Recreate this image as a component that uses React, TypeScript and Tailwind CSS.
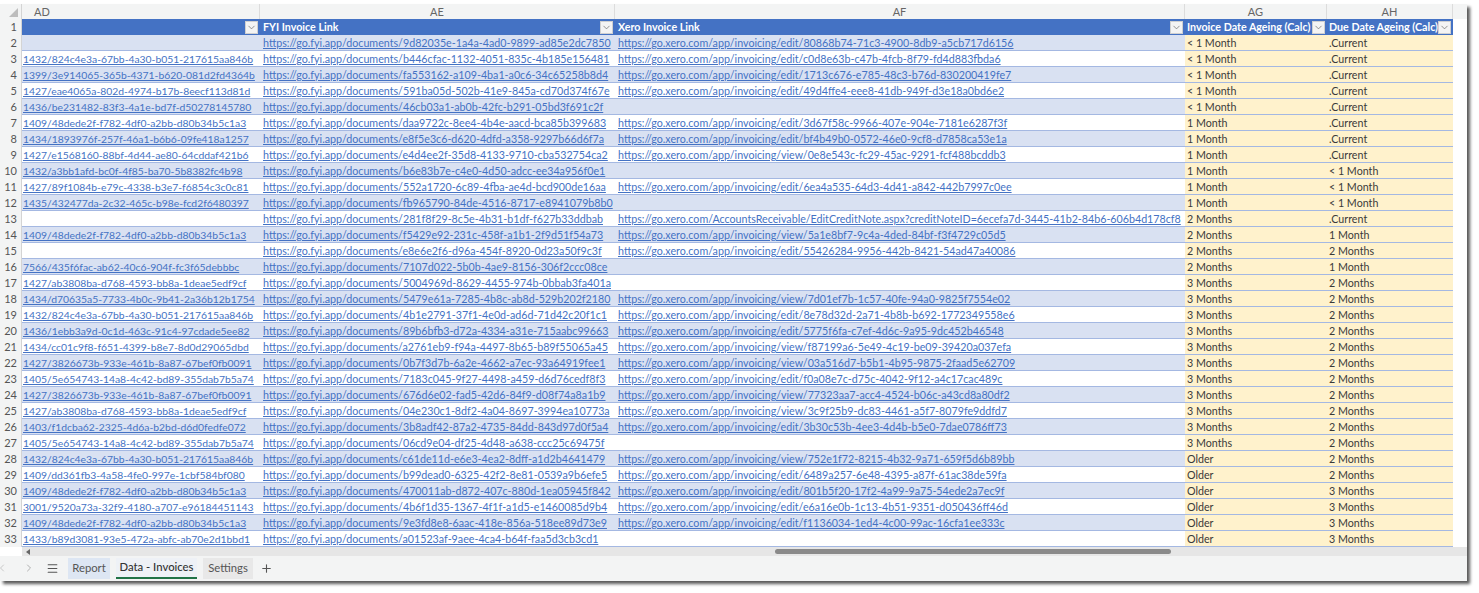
import React from 'react';
import { ChevronDown, ChevronLeft, ChevronRight, Menu, Plus } from 'lucide-react';

const fyi = 'https://go.fyi.app/documents/';
const xe = 'https://go.xero.com/app/invoicing/edit/';
const xv = 'https://go.xero.com/app/invoicing/view/';

const a = '1409/48dede2f-f782-4df0-a2bb-d80b34b5c1a3';
const b = '1432/824c4e3a-67bb-4a30-b051-217615aa846b';
const c = '1427/3826673b-933e-461b-8a87-67bef0fb0091';
const d = '1427/ab3808ba-d768-4593-bb8a-1deae5edf9cf';
const e = '1405/5e654743-14a8-4c42-bd89-355dab7b5a74';

const rows = [
  ['', '9d82035e-1a4a-4ad0-9899-ad85e2dc7850', xe + '80868b74-71c3-4900-8db9-a5cb717d6156', '< 1 Month', '.Current'],
  [b, 'b446cfac-1132-4051-835c-4b185e156481', xe + 'c0d8e63b-c47b-4fcb-8f79-fd4d883fbda6', '< 1 Month', '.Current'],
  ['1399/3e914065-365b-4371-b620-081d2fd4364b', 'fa553162-a109-4ba1-a0c6-34c65258b8d4', xe + '1713c676-e785-48c3-b76d-830200419fe7', '< 1 Month', '.Current'],
  ['1427/eae4065a-802d-4974-b17b-8eecf113d81d', '591ba05d-502b-41e9-845a-cd70d374f67e', xe + '49d4ffe4-eee8-41db-949f-d3e18a0bd6e2', '< 1 Month', '.Current'],
  ['1436/be231482-83f3-4a1e-bd7f-d50278145780', '46cb03a1-ab0b-42fc-b291-05bd3f691c2f', '', '< 1 Month', '.Current'],
  [a, 'daa9722c-8ee4-4b4e-aacd-bca85b399683', xe + '3d67f58c-9966-407e-904e-7181e6287f3f', '1 Month', '.Current'],
  ['1434/1893976f-257f-46a1-b6b6-09fe418a1257', 'e8f5e3c6-d620-4dfd-a358-9297b66d6f7a', xe + 'bf4b49b0-0572-46e0-9cf8-d7858ca53e1a', '1 Month', '.Current'],
  ['1427/e1568160-88bf-4d44-ae80-64cddaf421b6', 'e4d4ee2f-35d8-4133-9710-cba532754ca2', xv + '0e8e543c-fc29-45ac-9291-fcf488bcddb3', '1 Month', '.Current'],
  ['1432/a3bb1afd-bc0f-4f85-ba70-5b8382fc4b98', 'b6e83b7e-c4e0-4d50-adcc-ee34a956f0e1', '', '1 Month', '< 1 Month'],
  ['1427/89f1084b-e79c-4338-b3e7-f6854c3c0c81', '552a1720-6c89-4fba-ae4d-bcd900de16aa', xe + '6ea4a535-64d3-4d41-a842-442b7997c0ee', '1 Month', '< 1 Month'],
  ['1435/432477da-2c32-465c-b98e-fcd2f6480397', 'fb965790-84de-4516-8717-e8941079b8b0', '', '1 Month', '< 1 Month'],
  ['', '281f8f29-8c5e-4b31-b1df-f627b33ddbab', 'https://go.xero.com/AccountsReceivable/EditCreditNote.aspx?creditNoteID=6ecefa7d-3445-41b2-84b6-606b4d178cf8', '2 Months', '.Current'],
  [a, 'f5429e92-231c-458f-a1b1-2f9d51f54a73', xv + '5a1e8bf7-9c4a-4ded-84bf-f3f4729c05d5', '2 Months', '1 Month'],
  ['', 'e8e6e2f6-d96a-454f-8920-0d23a50f9c3f', xe + '55426284-9956-442b-8421-54ad47a40086', '2 Months', '2 Months'],
  ['7566/435f6fac-ab62-40c6-904f-fc3f65debbbc', '7107d022-5b0b-4ae9-8156-306f2ccc08ce', '', '2 Months', '1 Month'],
  [d, '5004969d-8629-4455-974b-0bbab3fa401a', '', '3 Months', '2 Months'],
  ['1434/d70635a5-7733-4b0c-9b41-2a36b12b1754', '5479e61a-7285-4b8c-ab8d-529b202f2180', xv + '7d01ef7b-1c57-40fe-94a0-9825f7554e02', '3 Months', '2 Months'],
  [b, '4b1e2791-37f1-4e0d-ad6d-71d42c20f1c1', xe + '8e78d32d-2a71-4b8b-b692-1772349558e6', '3 Months', '2 Months'],
  ['1436/1ebb3a9d-0c1d-463c-91c4-97cdade5ee82', '89b6bfb3-d72a-4334-a31e-715aabc99663', xe + '5775f6fa-c7ef-4d6c-9a95-9dc452b46548', '3 Months', '2 Months'],
  ['1434/cc01c9f8-f651-4399-b8e7-8d0d29065dbd', 'a2761eb9-f94a-4497-8b65-b89f55065a45', xv + 'f87199a6-5e49-4c19-be09-39420a037efa', '3 Months', '2 Months'],
  [c, '0b7f3d7b-6a2e-4662-a7ec-93a64919fee1', xv + '03a516d7-b5b1-4b95-9875-2faad5e62709', '3 Months', '2 Months'],
  [e, '7183c045-9f27-4498-a459-d6d76cedf8f3', xe + 'f0a08e7c-d75c-4042-9f12-a4c17cac489c', '3 Months', '2 Months'],
  [c, '676d6e02-fad5-42d6-84f9-d08f74a8a1b9', xv + '77323aa7-acc4-4524-b06c-a43cd8a80df2', '3 Months', '2 Months'],
  [d, '04e230c1-8df2-4a04-8697-3994ea10773a', xv + '3c9f25b9-dc83-4461-a5f7-8079fe9ddfd7', '3 Months', '2 Months'],
  ['1403/f1dcba62-2325-4d6a-b2bd-d6d0fedfe072', '3b8adf42-87a2-4735-84dd-843d97d0f5a4', xe + '3b30c53b-4ee3-4d4b-b5e0-7dae0786ff73', '3 Months', '2 Months'],
  [e, '06cd9e04-df25-4d48-a638-ccc25c69475f', '', '3 Months', '2 Months'],
  [b, 'c61de11d-e6e3-4ea2-8dff-a1d2b4641479', xv + '752e1f72-8215-4b32-9a71-659f5d6b89bb', 'Older', '2 Months'],
  ['1409/dd361fb3-4a58-4fe0-997e-1cbf584bf080', 'b99dead0-6325-42f2-8e81-0539a9b6efe5', xe + '6489a257-6e48-4395-a87f-61ac38de59fa', 'Older', '2 Months'],
  [a, '470011ab-d872-407c-880d-1ea05945f842', xe + '801b5f20-17f2-4a99-9a75-54ede2a7ec9f', 'Older', '3 Months'],
  ['3001/9520a73a-32f9-4180-a707-e96184451143', '4b6f1d35-1367-4f1f-a1d5-e1460085d9b4', xe + 'e6a16e0b-1c13-4b51-9351-d050436ff46d', 'Older', '3 Months'],
  [a, '9e3fd8e8-6aac-418e-856a-518ee89d73e9', xe + 'f1136034-1ed4-4c00-99ac-16cfa1ee333c', 'Older', '3 Months'],
  ['1433/b89d3081-93e5-472a-abfc-ab70e2d1bbd1', 'a01523af-9aee-4ca4-b64f-faa5d3cb3cd1', '', 'Older', '3 Months'],
];

const columns = [
  { name: 'AD', title: '', width: 'w-[238px]' },
  { name: 'AE', title: 'FYI Invoice Link', width: 'w-[355px]' },
  { name: 'AF', title: 'Xero Invoice Link', width: 'w-[570px]' },
  { name: 'AG', title: 'Invoice Date Ageing (Calc)', width: 'w-[142px]' },
  { name: 'AH', title: 'Due Date Ageing (Calc)', width: 'w-[126px]' },
];

function FilterButton() {
  return (
    <span className="w-[13px] h-[13px] bg-[#f4f4f4] border border-[#d0d0d0] flex items-center justify-center shrink-0">
      <ChevronDown className="w-[11px] h-[11px] text-[#666666]" strokeWidth={1.5} />
    </span>
  );
}

function Link({ text, pad }: { text: string; pad: string }) {
  return <a className={`${pad} underline text-[#4472c4] whitespace-nowrap`}>{text}</a>;
}

export default function App() {
  return (
    <div className="w-[1479px] h-[593px] bg-white pt-1 overflow-hidden font-['Lato','Liberation_Sans',sans-serif] text-[10.7px] leading-4">
      <div className="w-[1467px] h-[577px] bg-white flex flex-col shadow-[3px_3px_3px_rgba(0,0,0,0.65)]">
        {/* column letters */}
        <div className="flex h-[15px] bg-[#f3f4f4] text-[#666666] text-[11px] leading-[15px] shrink-0">
          <div className="w-[22px] relative border-r border-[#d4d4d4]">
            <span className="absolute right-[3px] bottom-[2px] w-0 h-0 border-l-[9px] border-l-transparent border-b-[9px] border-b-[#bdbdbd]" />
          </div>
          {columns.map((col, i) => (
            <div key={col.name} className={`${col.width} border-r border-[#dcdcdc] ${i === 0 ? 'pl-3' : 'text-center'}`}>
              {col.name}
            </div>
          ))}
        </div>

        {/* table header */}
        <div className="flex h-4 shrink-0 bg-white">
          <div className="w-[22px] bg-[#f3f4f4] text-[#555555] text-[11px] text-right pr-1 border-r border-[#d4d4d4]">1</div>
          <div className="flex bg-[#4472c4] text-white font-bold text-[10.7px]">
            {columns.map((col, i) => (
              <div key={col.name} className={`${col.width} flex items-center justify-between ${i === 3 || i === 4 ? 'pl-[2px]' : 'pl-[3px]'} pr-[2px]`}>
                <span className="whitespace-nowrap">{col.title}</span>
                <FilterButton />
              </div>
            ))}
          </div>
        </div>

        {/* rows */}
        <div className="flex flex-col">
          {rows.map((row, i) => {
            const even = i % 2 === 0;
            return (
              <div key={i} className="flex h-4 shrink-0">
                <div className="w-[22px] bg-[#f3f4f4] text-[#555555] text-[11px] text-right pr-1 border-r border-[#d4d4d4] shrink-0">{i + 2}</div>
                <div className={`flex ${even ? 'bg-[#d9e1f2]' : 'bg-white'} border-b border-[#a4b8e2]`}>
                  <div className="w-[238px] text-[10.35px]">{row[0] && <Link text={row[0]} pad="pl-[1px]" />}</div>
                  <div className="w-[355px] pl-[3px]">
                    <Link text={fyi + row[1]} pad="" />
                  </div>
                  <div className="w-[570px] pl-[3px]">{row[2] && <Link text={row[2]} pad="" />}</div>
                  <div className="w-[142px] bg-[#fff2cc] pl-[2px] text-[#3a3a3a] h-[15px]">{row[3]}</div>
                  <div className="w-[126px] bg-[#fff2cc] pl-[2px] text-[#3a3a3a] h-[15px]">{row[4]}</div>
                </div>
              </div>
            );
          })}
        </div>

        {/* scrollbar */}
        <div className="h-[9px] ml-[22px] bg-[#e6e6e6] flex items-center shrink-0 gap-[745px]">
          <span className="ml-[4px] w-0 h-0 border-y-[3px] border-y-transparent border-r-[4px] border-r-[#666666]" />
          <span className="w-[396px] h-[5px] rounded-full bg-[#8a8a8a]" />
        </div>

        {/* sheet tabs */}
        <div className="flex-1 bg-[#f3f4f4] flex items-center pb-[1px] text-[11.3px] text-[#555555]">
          <ChevronLeft className="w-3 h-3 -ml-1 text-[#c8c8c8]" />
          <ChevronRight className="w-3 h-3 ml-[15px] text-[#b0b0b0]" />
          <Menu className="w-[13px] h-[13px] ml-[11px] text-[#555555]" />
          <div className="flex items-center ml-[9px] gap-[6px]">
            <span className="h-[21px] w-[42px] bg-[#dde6f3] flex items-center justify-center">Report</span>
            <span className="h-[21px] w-[81px] bg-[#eef1f6] flex items-center justify-center font-medium text-[#333333] border-b-2 border-[#217346]">Data - Invoices</span>
            <span className="h-[21px] w-[50px] bg-[#e8e8e8] flex items-center justify-center">Settings</span>
          </div>
          <Plus className="w-[13px] h-[13px] ml-[7px] text-[#555555]" />
        </div>
      </div>
    </div>
  );
}
